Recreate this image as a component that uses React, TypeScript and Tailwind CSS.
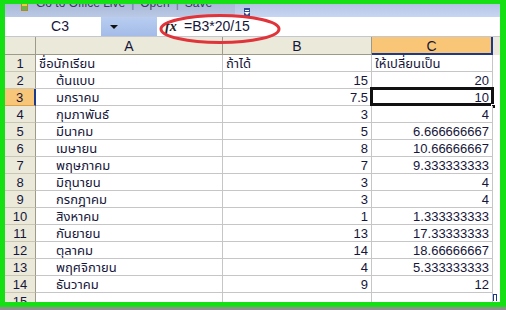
import React from "react"

type Row = { n: number; name: string; b: string; c: string; head?: boolean }

const rows: Row[] = [
  { n: 1, name: "ชื่อนักเรียน", b: "ถ้าได้", c: "ให้เปลี่ยนเป็น", head: true },
  { n: 2, name: "ต้นแบบ", b: "15", c: "20" },
  { n: 3, name: "มกราคม", b: "7.5", c: "10" },
  { n: 4, name: "กุมภาพันธ์", b: "3", c: "4" },
  { n: 5, name: "มีนาคม", b: "5", c: "6.666666667" },
  { n: 6, name: "เมษายน", b: "8", c: "10.66666667" },
  { n: 7, name: "พฤษภาคม", b: "7", c: "9.333333333" },
  { n: 8, name: "มิถุนายน", b: "3", c: "4" },
  { n: 9, name: "กรกฎาคม", b: "3", c: "4" },
  { n: 10, name: "สิงหาคม", b: "1", c: "1.333333333" },
  { n: 11, name: "กันยายน", b: "13", c: "17.33333333" },
  { n: 12, name: "ตุลาคม", b: "14", c: "18.66666667" },
  { n: 13, name: "พฤศจิกายน", b: "4", c: "5.333333333" },
  { n: 14, name: "ธันวาคม", b: "9", c: "12" },
  { n: 15, name: "", b: "", c: "" },
]

const font = { fontFamily: '"Liberation Sans", Tahoma, "Noto Sans Thai", "DejaVu Sans", sans-serif' }

function SheetRow({ r }: { r: Row }) {
  const sel = r.n === 3
  return (
    <div className="flex h-[17px] shrink-0 text-[13px] leading-[17px] text-[#16163a]">
      <div
        className={
          sel
            ? "w-[31px] shrink-0 border-r-2 border-r-[#1c3a8c] border-b border-b-[#d9a24a] bg-[#f8c678] text-center"
            : "w-[31px] shrink-0 border-r border-r-[#9d9a88] border-b border-b-[#c9c6b4] bg-[#ebe9da] text-center"
        }
      >
        {r.n}
      </div>
      <div className={"w-[187px] shrink-0 border-r border-b border-[#c6c6c6] whitespace-nowrap " + (r.head ? "pl-[3px]" : "pl-[20px]")}>
        {r.name}
      </div>
      <div className={"w-[149px] shrink-0 border-r border-b border-[#c6c6c6] whitespace-nowrap " + (r.head ? "pl-[3px]" : "pr-[3px] text-right")}>
        {r.b}
      </div>
      <div className={"relative w-[121px] shrink-0 border-r border-b border-[#c6c6c6] whitespace-nowrap " + (r.head ? "pl-[3px]" : "pr-[3px] text-right")}>
        {r.c}
        {sel && (
          <>
            <span className="absolute -left-[2px] -top-[2px] right-[-2px] bottom-[-1px] border-[3px] border-[#111]" />
            <span className="absolute right-[-4px] bottom-[-4px] h-[5px] w-[5px] bg-[#111] border border-white" />
          </>
        )}
      </div>
      <div className="flex-1 relative">
        {r.n === 15 && (
          <span className="absolute left-[0px] top-[1px] h-[7px] w-[4px] border border-[#1c3a8c] border-b-0" />
        )}
      </div>
    </div>
  )
}

export default function App() {
  return (
    <div className="w-[506px] h-[310px] overflow-hidden bg-[#8f8f8f]" style={font}>
      <div className="h-[307px] flex flex-col border-t-4 border-l-[5px] border-r-[6px] border-b-[5px] border-[#14e014] bg-white overflow-hidden">
        {/* toolbar strip, mostly cut off */}
        <div className="h-[13px] shrink-0 overflow-hidden bg-gradient-to-b from-[#b3c3e2] to-[#c7d7f3] flex">
          <div className="flex items-start gap-[6px] text-[12px] leading-[14px] text-[#3a3a58] whitespace-nowrap w-[230px] bg-gradient-to-b from-[#a9b8d6] to-[#bac9e6]">
            <span className="ml-[4px] mt-[4px] h-[2px] w-[2px] bg-[#3a3a6a]" />
            <span className="ml-[6px] -mt-[1px] flex h-[8px] w-[11px] items-end justify-end bg-[#f3c93f] border border-[#b08a20]">
              <span className="h-[4px] w-[5px] bg-[#6fb14a]" />
            </span>
            <span className="-mt-[8px] ml-[2px]">Go to Office Live</span>
            <span className="-mt-[8px] text-[#6b7696]">|</span>
            <span className="-mt-[8px]">Open</span>
            <span className="-mt-[8px] text-[#6b7696]">|</span>
            <span className="-mt-[8px]">Save</span>
            <span className="ml-[26px] mt-[4px] h-[9px] w-[8px] bg-[#2d4d94] flex flex-col items-center justify-center gap-[1px]">
              <span className="h-[1px] w-[4px] bg-white" />
              <span className="h-0 w-0 border-x-[3px] border-x-transparent border-t-[3px] border-t-white" />
            </span>
          </div>
        </div>
        {/* formula bar */}
        <div className="relative h-[19px] shrink-0 flex text-[14px] leading-[19px] text-[#16163a]">
          <div className="w-[96px] text-center pl-[14px]">C3</div>
          <div className="w-[56px] bg-gradient-to-b from-[#b9cdf0] to-[#a3bce8] flex items-center pl-[9px]">
            <span className="h-0 w-0 border-x-[4px] border-x-transparent border-t-[4px] border-t-[#111]" />
          </div>
          <div className="w-[26px] pl-[8px] italic font-bold text-[14px] text-[#222]" style={{ fontFamily: '"Liberation Serif", serif' }}>
            fx
          </div>
          <div className="flex-1 pl-[1px]">=B3*20/15</div>
          <svg className="absolute left-[153px] top-[-4px]" width="126" height="32" viewBox="0 0 126 32">
            <ellipse cx="62" cy="16" rx="59" ry="13.5" fill="none" stroke="#e0343a" strokeWidth="3" />
          </svg>
        </div>
        {/* column headers */}
        <div className="h-[19px] shrink-0 flex text-[14px] leading-[18px] text-[#16163a] border-t border-[#c4c7cf]">
          <div className="w-[31px] shrink-0 bg-[#ebe9da] border-r border-b border-[#9d9a88]" />
          <div className="w-[187px] shrink-0 bg-[#ebe9da] border-r border-b border-[#9d9a88] text-center">A</div>
          <div className="w-[149px] shrink-0 bg-[#ebe9da] border-r border-b border-[#9d9a88] text-center">B</div>
          <div className="w-[121px] shrink-0 bg-[#f9c677] border-r-2 border-r-[#1c3a8c] border-b-2 border-b-[#1c3a8c] text-center">C</div>
          <div className="flex-1 bg-[#ece9dc]" />
        </div>
        {rows.map(r => (
          <SheetRow key={r.n} r={r} />
        ))}
      </div>
    </div>
  )
}
